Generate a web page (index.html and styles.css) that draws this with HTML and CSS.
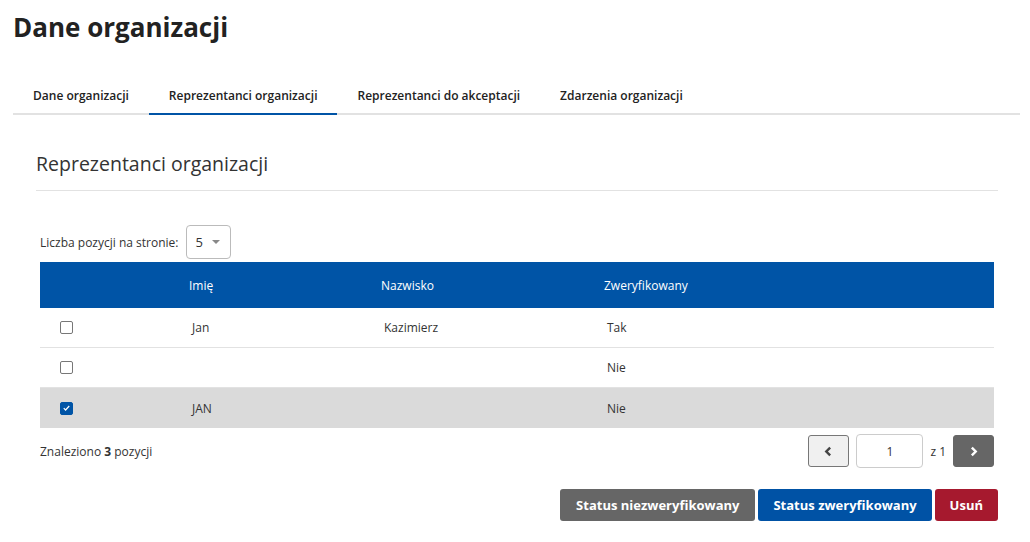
FILE: index.html
```html
<!DOCTYPE html>
<html lang="pl">
<head>
<meta charset="utf-8">
<title>Dane organizacji</title>
<link rel="stylesheet" href="styles.css">
</head>
<body>
<div class="page">
  <h1 class="title">Dane organizacji</h1>
  <nav class="tabs">
    <a class="tab">Dane organizacji</a>
    <a class="tab active">Reprezentanci organizacji</a>
    <a class="tab">Reprezentanci do akceptacji</a>
    <a class="tab">Zdarzenia organizacji</a>
  </nav>
  <section class="panel">
    <h2 class="panel-title">Reprezentanci organizacji</h2>
    <div class="content">
      <div class="perpage">
        <span>Liczba pozycji na stronie:</span>
        <div class="select"><span>5</span><span class="caret"></span></div>
      </div>
      <div class="table">
        <div class="row head">
          <div class="cell"></div>
          <div class="cell">Imię</div>
          <div class="cell">Nazwisko</div>
          <div class="cell">Zweryfikowany</div>
        </div>
        <div class="row">
          <div class="cell"><span class="cb"></span></div>
          <div class="cell">Jan</div>
          <div class="cell">Kazimierz</div>
          <div class="cell">Tak</div>
        </div>
        <div class="row">
          <div class="cell"><span class="cb"></span></div>
          <div class="cell"></div>
          <div class="cell"></div>
          <div class="cell">Nie</div>
        </div>
        <div class="row selected">
          <div class="cell"><span class="cb checked"><svg viewBox="0 0 12 12" width="12" height="12"><path d="M3 6.2l2 2 4-4.4" fill="none" stroke="#fff" stroke-width="1.3"/></svg></span></div>
          <div class="cell">JAN</div>
          <div class="cell"></div>
          <div class="cell">Nie</div>
        </div>
      </div>
      <div class="footer">
        <div class="found">Znaleziono <b>3</b> pozycji</div>
        <div class="pager">
          <button class="pbtn prev"><svg viewBox="0 0 10 10" width="11" height="11"><path d="M6.5 1.5L3 5l3.5 3.5" fill="none" stroke="#444" stroke-width="2.2"/></svg></button>
          <div class="pinput">1</div>
          <span class="of">z 1</span>
          <button class="pbtn next"><svg viewBox="0 0 10 10" width="11" height="11"><path d="M3.5 1.5L7 5 3.5 8.5" fill="none" stroke="#fff" stroke-width="2.2"/></svg></button>
        </div>
      </div>
      <div class="actions">
        <button class="btn gray">Status niezweryfikowany</button>
        <button class="btn blue">Status zweryfikowany</button>
        <button class="btn red">Usuń</button>
      </div>
    </div>
  </section>
</div>
</body>
</html>
```
FILE: styles.css
```css
* { box-sizing: border-box; }
body {
  margin: 0;
  font-family: "Open Sans", "Liberation Sans", sans-serif;
  color: #222;
  background: #fff;
}
.page {
  padding: 0 10px 0 13px;
}
.title {
  margin: 0;
  padding-top: 9px;
  font-size: 26px;
  line-height: 36px;
  font-weight: 700;
  color: #222;
}
.tabs {
  display: flex;
  margin-top: 32px;
  border-bottom: 2px solid #e2e2e2;
}
.tab {
  padding: 10px 20px 9px;
  font-size: 12px;
  line-height: 17px;
  font-weight: 600;
  color: #222;
  margin-bottom: -2px;
  border-bottom: 2px solid transparent;
}
.tab.active {
  border-bottom-color: #0054a6;
}
.panel {
  padding: 0 22px 0 23px;
}
.panel-title {
  margin: 0;
  padding: 35px 0 12px;
  font-size: 19.5px;
  line-height: 28px;
  font-weight: 400;
  color: #333;
  border-bottom: 1px solid #e2e2e2;
}
.content {
  padding: 34px 4px 0 4px;
}
.perpage {
  display: flex;
  align-items: center;
  gap: 8px;
  font-size: 12px;
  color: #333;
}
.select {
  width: 45px;
  height: 34px;
  border: 1px solid #bbb;
  border-radius: 4px;
  display: flex;
  align-items: center;
  gap: 9px;
  padding-left: 8px;
  font-size: 13px;
}
.caret {
  width: 0;
  height: 0;
  border-left: 4px solid transparent;
  border-right: 4px solid transparent;
  border-top: 4px solid #888;
}
.table {
  margin-top: 3px;
}
.row {
  display: grid;
  grid-template-columns: 135px 192px 223px 1fr;
  height: 40px;
  align-items: center;
  border-bottom: 1px solid #e2e2e2;
  font-size: 12px;
  color: #333;
}
.row .cell { padding-left: 17px; }
.row .cell:first-child { padding-left: 20px; display: flex; align-items: center; }
.row.head {
  height: 46px;
  background: #0054a6;
  color: #fff;
  border-bottom: none;
}
.row.head .cell { padding-left: 14px; }
.row.selected {
  background: #dadada;
  border-bottom: none;
}
.cb {
  width: 13px;
  height: 13px;
  border: 1px solid #777;
  border-radius: 2px;
  background: #fff;
  display: flex;
  align-items: center;
  justify-content: center;
}
.cb.checked {
  background: #0054a6;
  border-color: #0054a6;
}
.footer {
  display: flex;
  justify-content: space-between;
  align-items: center;
  margin-top: 6px;
}
.found {
  font-size: 12px;
  color: #333;
}
.pager {
  display: flex;
  align-items: center;
}
.pbtn {
  width: 41px;
  height: 32px;
  border-radius: 3px;
  display: flex;
  align-items: center;
  justify-content: center;
  padding: 0;
}
.pbtn.prev {
  background: #f0f0f0;
  border: 1px solid #777;
}
.pbtn.next {
  background: #666;
  border: 1px solid #666;
  width: 41px;
}
.pinput {
  margin-left: 7px;
  width: 67px;
  height: 34px;
  border: 1px solid #ccc;
  border-radius: 4px;
  display: flex;
  align-items: center;
  justify-content: center;
  font-size: 12px;
  color: #333;
}
.of {
  font-size: 12px;
  color: #333;
  margin: 0 7px;
}
.actions {
  display: flex;
  justify-content: flex-end;
  gap: 3px;
  margin-top: 21px;
  margin-right: -4px;
}
.btn {
  height: 32px;
  border: none;
  border-radius: 3px;
  color: #fff;
  font-family: "Open Sans", "Liberation Sans", sans-serif;
  font-size: 13px;
  font-weight: 700;
  padding: 0 15px;
}
.btn.gray { background: #666; padding: 0 16px; }
.btn.blue { background: #0052a5; }
.btn.red { background: #a6192e; }
```
